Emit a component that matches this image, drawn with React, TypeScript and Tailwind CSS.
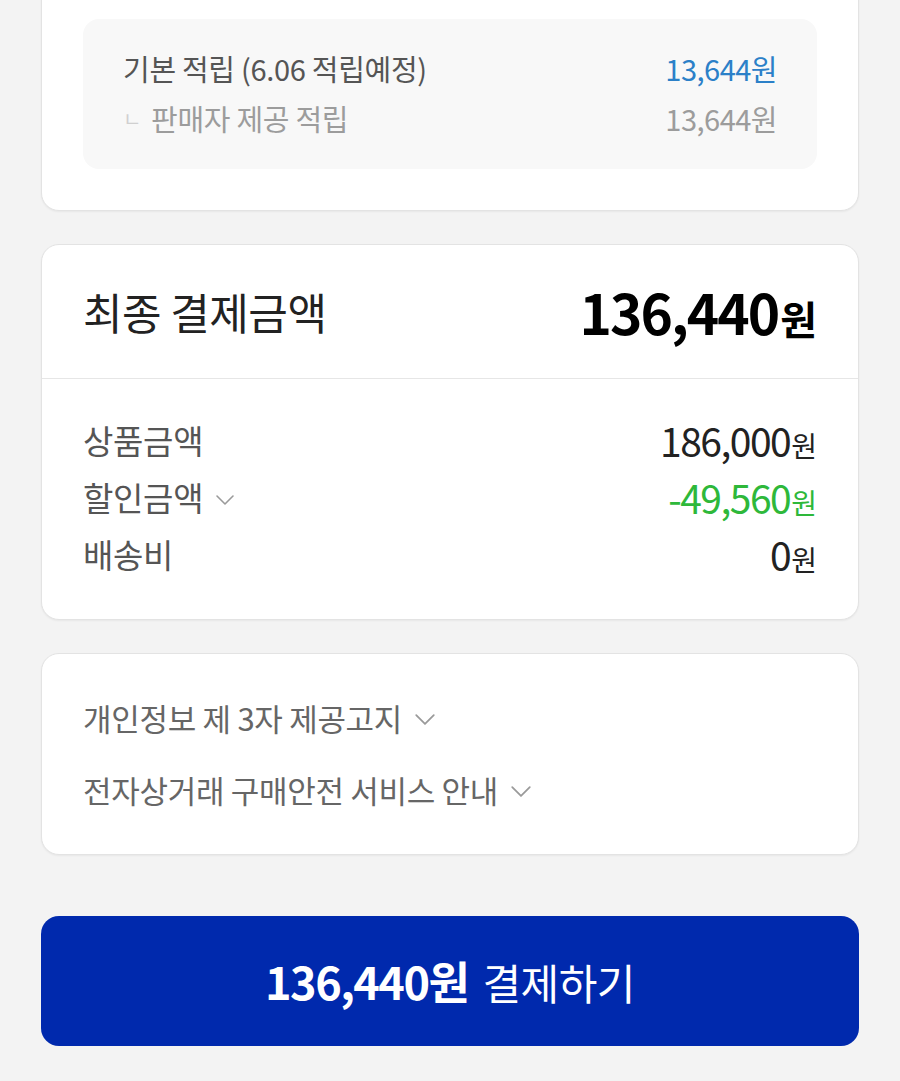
import React from 'react';

const font = { fontFamily: '"Noto Sans CJK KR", "Noto Sans", sans-serif' };

function Chevron({ size = 20 }: { size?: number }) {
  return (
    <svg width={size} height={size * 0.6} viewBox="0 0 20 12" fill="none" className="ml-[12px] mt-[4px] shrink-0">
      <path d="M2 2l8 8 8-8" stroke="#9a9a9a" strokeWidth="1.6" strokeLinecap="round" strokeLinejoin="round" />
    </svg>
  );
}

function Won({ value, className, unitClass }: { value: string; className: string; unitClass: string }) {
  return (
    <span className={className}>
      {value}
      <span className={unitClass}>원</span>
    </span>
  );
}

const summary = [
  { label: '상품금액', value: '186,000', color: 'text-[#222222]', chevron: false },
  { label: '할인금액', value: '-49,560', color: 'text-[#2eb83a]', chevron: true },
  { label: '배송비', value: '0', color: 'text-[#222222]', chevron: false },
];

export default function App() {
  return (
    <div className="h-[1081px] w-[900px] overflow-hidden bg-[#f3f3f3]" style={font}>
      <div className="flex flex-col px-[41px]">
        {/* 적립 카드 (위쪽 잘림) */}
        <div className="-mt-[23px] rounded-[18px] border border-[#e3e3e3] bg-white p-[41px] shadow-[0_1px_2px_rgba(0,0,0,0.05)]">
          <div className="flex flex-col rounded-[16px] bg-[#f8f8f8] px-[40px] pb-[25px] pt-[25px]">
            <div className="flex h-[50px] items-center justify-between">
              <span className="text-[29px] tracking-[-0.3px] text-[#555555]">기본 적립 (6.06 적립예정)</span>
              <span className="text-[29px] tracking-[-0.5px] text-[#2b80c8]">13,644원</span>
            </div>
            <div className="flex h-[50px] items-center justify-between">
              <span className="flex items-center text-[29px] tracking-[-0.3px] text-[#9c9c9c]">
                <span className="mr-[10px] text-[20px] text-[#d0d0d0]">ㄴ</span>판매자 제공 적립
              </span>
              <span className="text-[29px] tracking-[-0.5px] text-[#9c9c9c]">13,644원</span>
            </div>
          </div>
        </div>

        {/* 최종 결제금액 */}
        <div className="mt-[33px] rounded-[18px] border border-[#e3e3e3] bg-white shadow-[0_1px_2px_rgba(0,0,0,0.05)]">
          <div className="flex h-[134px] items-center justify-between border-b border-[#e6e6e6] px-[41px]">
            <span className="text-[43px] tracking-[-0.5px] text-[#222222]">최종 결제금액</span>
            <Won
              value="136,440"
              className="text-[55px] font-bold tracking-[-2px] text-black"
              unitClass="ml-[2px] text-[40px] tracking-normal"
            />
          </div>
          <div className="flex flex-col px-[41px] pb-[36px] pt-[33px]">
            {summary.map((row) => (
              <div key={row.label} className="flex h-[57px] items-center justify-between">
                <span className="flex items-center text-[33px] tracking-[-0.3px] text-[#555555]">
                  {row.label}
                  {row.chevron && <Chevron size={20} />}
                </span>
                <Won
                  value={row.value}
                  className={`text-[39px] tracking-[-1.5px] ${row.color}`}
                  unitClass="ml-[1px] text-[28px] tracking-normal"
                />
              </div>
            ))}
          </div>
        </div>

        {/* 고지 */}
        <div className="mt-[33px] flex flex-col rounded-[18px] border border-[#e3e3e3] bg-white px-[41px] pb-[28px] pt-[28px] shadow-[0_1px_2px_rgba(0,0,0,0.05)]">
          <div className="flex h-[72px] items-center text-[31px] tracking-[-0.3px] text-[#666666]">
            개인정보 제 3자 제공고지
            <Chevron size={22} />
          </div>
          <div className="flex h-[72px] items-center text-[31px] tracking-[-0.3px] text-[#666666]">
            전자상거래 구매안전 서비스 안내
            <Chevron size={22} />
          </div>
        </div>

        <button className="mt-[61px] flex h-[130px] items-center justify-center rounded-[18px] bg-[#0029ad] text-white">
          <span className="text-[45px] font-bold tracking-[-1.5px]">136,440원</span>
          <span className="ml-[14px] text-[42px] tracking-[-0.5px]">결제하기</span>
        </button>
      </div>
    </div>
  );
}
